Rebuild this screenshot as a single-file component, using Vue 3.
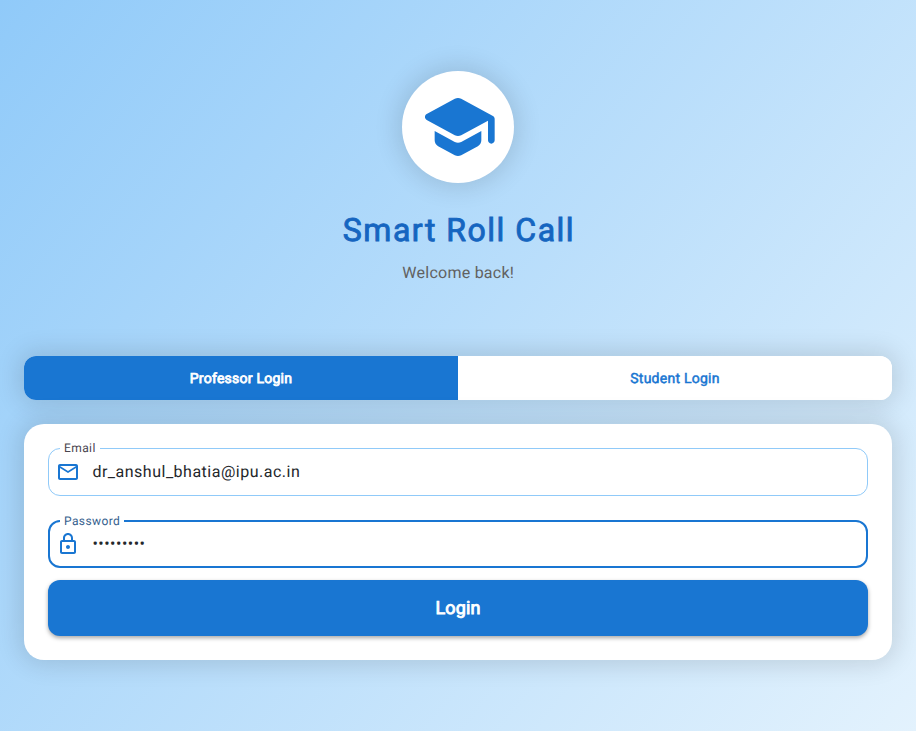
<script setup>
import { ref } from 'vue'

const role = ref('professor')
const email = ref('dr_anshul_bhatia@ipu.ac.in')
const password = ref('anshul123')
const tabs = [
  { id: 'professor', label: 'Professor Login' },
  { id: 'student', label: 'Student Login' },
]
</script>

<template>
  <main class="page">
    <div class="badge">
      <svg viewBox="0 0 24 24" width="80" height="80" fill="currentColor">
        <path d="M5 13.18v2.81c0 .73.4 1.41 1.04 1.76l5 2.73c.6.33 1.32.33 1.92 0l5-2.73c.64-.35 1.04-1.03 1.04-1.76v-2.81l-6.04 3.3c-.6.33-1.32.33-1.92 0L5 13.18zm6.04-9.66l-8.43 4.6c-.69.38-.69 1.38 0 1.76l8.43 4.6c.6.33 1.32.33 1.92 0L21 10.09V16c0 .55.45 1 1 1s1-.45 1-1V9.59c0-.37-.2-.7-.52-.88l-9.52-5.19c-.6-.32-1.32-.32-1.92 0z" />
      </svg>
    </div>
    <h1 class="title">Smart Roll Call</h1>
    <p class="subtitle">Welcome back!</p>

    <div class="tabs">
      <button
        v-for="tab in tabs"
        :key="tab.id"
        type="button"
        class="tab"
        :class="{ active: role === tab.id }"
        @click="role = tab.id"
      >{{ tab.label }}</button>
    </div>

    <form class="card" @submit.prevent>
      <label class="field">
        <span class="label">Email</span>
        <svg class="icon" viewBox="0 0 24 24" width="24" height="24" fill="currentColor">
          <path d="M22 6c0-1.100-.9-2-2-2H4c-1.100 0-2 .9-2 2v12c0 1.100.9 2 2 2h16c1.100 0 2-.9 2-2V6zm-2 0l-8 5-8-5h16zm0 12H4V8l8 5 8-5v10z" />
        </svg>
        <input v-model="email" class="input" type="text" />
      </label>
      <label class="field focused">
        <span class="label">Password</span>
        <svg class="icon" viewBox="0 0 24 24" width="24" height="24" fill="currentColor">
          <path d="M18 8h-1V6c0-2.760-2.240-5-5-5S7 3.240 7 6v2H6c-1.100 0-2 .9-2 2v10c0 1.100.9 2 2 2h12c1.100 0 2-.9 2-2V10c0-1.100-.9-2-2-2zM9 6c0-1.660 1.340-3 3-3s3 1.340 3 3v2H9V6zm9 14H6V10h12v10zm-6-3c1.100 0 2-.9 2-2s-.9-2-2-2-2 .9-2 2 .9 2 2 2z" />
        </svg>
        <input v-model="password" class="input" type="password" />
      </label>
      <button class="submit" type="submit">Login</button>
    </form>
  </main>
</template>

<style>
body {
  margin: 0;
}
</style>

<style scoped>
.page {
  box-sizing: border-box;
  height: 100vh;
  min-height: 731px;
  padding: 71px 24px;
  display: flex;
  flex-direction: column;
  align-items: center;
  background: linear-gradient(128.6deg, #90caf9, #e3f2fd);
  font-family: Roboto, sans-serif;
  text-rendering: geometricPrecision;
}

.badge {
  padding: 16px;
  border-radius: 50%;
  background: #fff;
  color: #1976d2;
  box-shadow: 0 0 24px 5px rgba(0, 0, 0, 0.12);
}

.badge svg {
  display: block;
}

.title {
  margin: 28px 0 0;
  padding-left: 2px;
  font-size: 32px;
  font-weight: 400;
  line-height: 38px;
  letter-spacing: 1.5px;
  color: #1565c0;
  -webkit-text-stroke: 0.9px currentColor;
}

.subtitle {
  margin: 14px 0 0;
  padding-left: 0.5px;
  font-size: 16px;
  line-height: 19px;
  letter-spacing: 0.25px;
  color: #616161;
}

.tabs {
  align-self: stretch;
  display: flex;
  height: 44px;
  margin-top: 74px;
  border-radius: 12px;
  background: #fff;
  overflow: hidden;
  flex: none;
  box-shadow: 0 0 24px 5px rgba(0, 0, 0, 0.12);
}

.tab {
  flex: 1;
  padding: 2px 0 0;
  border: 0;
  background: #fff;
  color: #1976d2;
  font: 400 14px/20px Roboto, sans-serif;
  letter-spacing: 0.25px;
  -webkit-text-stroke: 0.5px currentColor;
  text-rendering: geometricPrecision;
}

.tab.active {
  background: #1976d2;
  color: #fff;
  -webkit-text-stroke-width: 0.8px;
}

.card {
  box-sizing: border-box;
  align-self: stretch;
  display: flex;
  flex-direction: column;
  margin-top: 24px;
  padding: 24px;
  border-radius: 20px;
  background: #fff;
  box-shadow: 0 0 24px 5px rgba(0, 0, 0, 0.12);
}

.field {
  position: relative;
  box-sizing: border-box;
  display: flex;
  align-items: center;
  height: 48px;
  padding: 0 9px 0 7px;
  border: 1px solid #90caf9;
  border-radius: 12px;
  color: #1976d2;
}

.field.focused {
  margin-top: 24px;
  padding: 0 8px 0 6px;
  border: 2px solid #1976d2;
}

.label {
  position: absolute;
  top: -9px;
  left: 11px;
  padding: 0 4px;
  background: #fff;
  color: #49454f;
  font-size: 12px;
  line-height: 16px;
  letter-spacing: 0.4px;
}

.focused .label {
  left: 10px;
  color: #36618e;
}

.input {
  flex: 1;
  min-width: 0;
  height: 24px;
  margin-left: 12px;
  padding: 0 0 0 0.4px;
  border: 0;
  outline: 0;
  background: transparent;
  color: #24272b;
  font: 400 16px/24px Roboto, sans-serif;
  letter-spacing: 0.5px;
  text-rendering: geometricPrecision;
}

.submit {
  height: 56px;
  margin-top: 12px;
  padding: 2px 0 0;
  border: 0;
  border-radius: 12px;
  background: #1976d2;
  color: #fff;
  font: 400 18px/24px Roboto, sans-serif;
  letter-spacing: 0.1px;
  -webkit-text-stroke: 0.9px currentColor;
  text-rendering: geometricPrecision;
  box-shadow: 0 2px 4px rgba(0, 0, 0, 0.35);
}
</style>
